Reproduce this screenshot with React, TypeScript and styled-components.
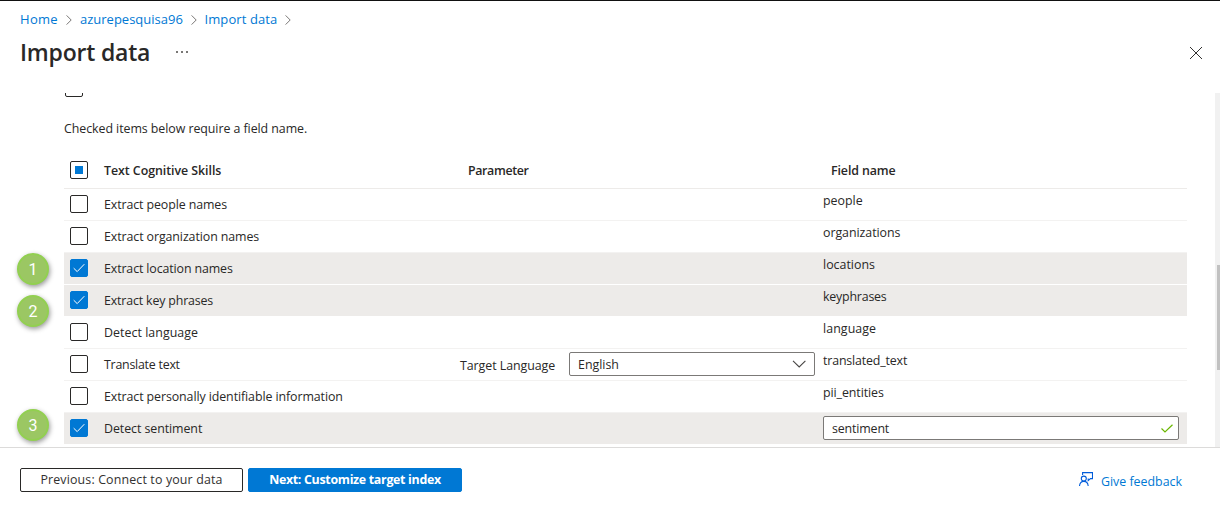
import React from "react";
import styled, { createGlobalStyle } from "styled-components";

const Global = createGlobalStyle`
  * { box-sizing: border-box; }
  body {
    margin: 0;
    background: #fff;
    color: #292827;
    font-family: "Open Sans", "Noto Sans", sans-serif;
    font-size: 12.4px;
    line-height: 18px;
  }
`;

const Page = styled.div`
  position: relative;
  width: 1220px;
  height: 510px;
  display: flex;
  flex-direction: column;
  border-top: 1px solid #111;
  overflow: hidden;
`;

const Text = styled.span<{ $ls?: number }>`
  white-space: nowrap;
  letter-spacing: ${(p) => p.$ls ?? 0}px;
`;

const Top = styled.header`
  height: 92px;
  flex: none;
  padding: 9px 17px 0 20px;
`;

const Crumbs = styled.nav`
  display: flex;
  align-items: center;
  height: 18px;
  font-size: 13px;
  color: #0078d4;
`;

const Crumb = styled.a<{ $w: number; $ls?: number }>`
  width: ${(p) => p.$w}px;
  white-space: nowrap;
  letter-spacing: ${(p) => p.$ls ?? 0}px;
`;

const CrumbArrow = styled.svg`
  width: 6px;
  height: 10px;
  margin: 1px 8px 0 8px;
  flex: none;
`;

const TitleRow = styled.div`
  display: flex;
  align-items: center;
  height: 32px;
  margin-top: 8px;
`;

const Title = styled.h1`
  margin: 0;
  width: 156px;
  font-size: 23px;
  line-height: 32px;
  font-weight: 600;
  letter-spacing: -0.2px;
  white-space: nowrap;
`;

const Dots = styled.svg`
  width: 12px;
  height: 2px;
`;

const Close = styled.svg`
  width: 14px;
  height: 14px;
  margin: 1px 0 0 auto;
`;

const Body = styled.main`
  display: flex;
  justify-content: space-between;
  height: 354px;
  flex: none;
  overflow: hidden;
`;

const Content = styled.div`
  width: 1123px;
  margin-left: 64px;
`;

const Track = styled.div`
  width: 5px;
  height: 354px;
  padding: 172px 0 0 2px;
  background: #f1f1f1;
`;

const Thumb = styled.div`
  height: 105px;
  background: #c1c1c1;
`;

const Box = styled.span<{ $on?: boolean }>`
  display: flex;
  align-items: center;
  justify-content: center;
  flex: none;
  width: 18px;
  height: 18px;
  border: 1px solid ${(p) => (p.$on ? "#0078d4" : "#292827")};
  border-radius: 2px;
  background: ${(p) => (p.$on ? "#0078d4" : "#fff")};
`;

const Partial = styled.span`
  width: 8px;
  height: 8px;
  background: #0078d4;
`;

const Above = styled.div`
  height: 27px;
  padding-left: 1px;
  margin-top: -14px;
`;

const Hint = styled.p`
  margin: 0;
  padding-top: 14px;
  height: 46px;
  white-space: nowrap;
`;

const Row = styled.div<{ $on?: boolean }>`
  display: grid;
  grid-template-columns: 34px 356px 363px 364px;
  align-items: center;
  height: 32px;
  padding: 0 0 1px 6px;
  border-bottom: 1px solid ${(p) => (p.$on ? "#fff" : "#f3f2f1")};
  background: ${(p) => (p.$on ? "#edebe9" : "#fff")};
`;

const HeadRow = styled(Row)`
  height: 37px;
  padding-bottom: 0;
  border-bottom-color: #edebe9;
  font-weight: 600;
`;

const HeadCell = styled.span<{ $indent?: number; $ls?: number }>`
  padding-top: 1px;
  padding-left: ${(p) => p.$indent ?? 0}px;
  letter-spacing: ${(p) => p.$ls ?? 0}px;
  white-space: nowrap;
`;

const SkillName = styled.span<{ $ls?: number }>`
  padding-top: 1px;
  white-space: nowrap;
  letter-spacing: ${(p) => p.$ls ?? 0}px;
`;

const FieldText = styled.span<{ $ls?: number }>`
  padding-bottom: 6px;
  letter-spacing: ${(p) => p.$ls ?? 0}px;
`;

const Param = styled.div`
  display: flex;
  align-items: center;
`;

const ParamLabel = styled.span`
  width: 109px;
  padding-top: 3px;
  letter-spacing: -0.05px;
`;

const Control = styled.div<{ $w: number }>`
  display: flex;
  align-items: center;
  justify-content: space-between;
  width: ${(p) => p.$w}px;
  height: 24px;
  padding: 0 5px 0 8px;
  border: 1px solid #7b7977;
  border-radius: 2px;
  background: #fff;
`;

const ControlText = styled(Text)`
  padding-top: 2px;
`;

const Glyph = styled.svg<{ $w: number; $h: number }>`
  width: ${(p) => p.$w}px;
  height: ${(p) => p.$h}px;
  flex: none;
`;

const Footer = styled.footer`
  display: flex;
  align-items: flex-start;
  height: 63px;
  padding: 20px 38px 0 20px;
  border-top: 1px solid #dcdbda;
`;

const Button = styled.button<{ $primary?: boolean; $w: number; $ls?: number }>`
  width: ${(p) => p.$w}px;
  height: 24px;
  margin-right: 5px;
  padding: 0 0 1px;
  border: 1px solid ${(p) => (p.$primary ? "#0078d4" : "#292827")};
  border-radius: 2px;
  background: ${(p) => (p.$primary ? "#0078d4" : "#fff")};
  color: ${(p) => (p.$primary ? "#fff" : "#323130")};
  font: ${(p) => (p.$primary ? 700 : 500)} 12.4px/18px "Open Sans", sans-serif;
  letter-spacing: ${(p) => p.$ls ?? 0}px;
  white-space: nowrap;
`;

const Feedback = styled.a`
  display: flex;
  align-items: flex-start;
  gap: 8px;
  margin: 3px 0 0 auto;
  color: #0078d4;
`;

const FeedbackIcon = styled(Glyph)`
  margin-top: 1px;
`;

const FeedbackText = styled.span`
  padding-top: 2px;
  white-space: nowrap;
`;

const Badge = styled.span<{ $y: number }>`
  position: absolute;
  left: 17px;
  top: ${(p) => p.$y}px;
  width: 32px;
  height: 32px;
  border: 2px solid #92d050;
  border-radius: 50%;
  background: #9bc763;
  box-shadow: 1px 2px 5px rgba(0, 0, 0, 0.4);
  color: #fff;
  font: 16px/29px Roboto, sans-serif;
  text-align: center;
`;

const Check = () => (
  <Glyph $w={12} $h={10} viewBox="0 0 12 10">
    <path d="M.7 5.2 4.2 8.6 11.3 1.2" fill="none" stroke="#fff" strokeWidth="1" />
  </Glyph>
);

const Arrow = () => (
  <CrumbArrow viewBox="0 0 6 10">
    <path d="M.6.4 5.2 5 .6 9.6" fill="none" stroke="#797775" strokeWidth="1" />
  </CrumbArrow>
);

type Skill = { name: string; field: string; ls?: number; fls?: number; on?: boolean; lang?: boolean; edit?: boolean };

const skills: Skill[] = [
  { name: "Extract people names", field: "people", ls: -0.1 },
  { name: "Extract organization names", field: "organizations", ls: -0.09, fls: -0.05 },
  { name: "Extract location names", field: "locations", ls: -0.12, on: true },
  { name: "Extract key phrases", field: "keyphrases", ls: -0.16, fls: -0.2, on: true },
  { name: "Detect language", field: "language", ls: 0.04, fls: 0.08 },
  { name: "Translate text", field: "translated_text", ls: -0.24, fls: -0.16, lang: true },
  { name: "Extract personally identifiable information", field: "pii_entities", ls: -0.09, fls: -0.08 },
  { name: "Detect sentiment", field: "sentiment", ls: -0.07, on: true, edit: true, fls: -0.15 },
];

export default function App() {
  return (
    <>
      <Global />
      <Page>
        <Top>
          <Crumbs>
            <Crumb $w={38} $ls={0.3}>Home</Crumb>
            <Arrow />
            <Crumb $w={102.5}>azurepesquisa96</Crumb>
            <Arrow />
            <Crumb $w={72.5} $ls={0.1}>Import data</Crumb>
            <Arrow />
          </Crumbs>
          <TitleRow>
            <Title>Import data</Title>
            <Dots viewBox="0 0 12 2">
              <path d="M0 0h2v2H0zM5 0h2v2H5zM10 0h2v2h-2z" fill="#797775" />
            </Dots>
            <Close viewBox="0 0 14 14">
              <path d="M1 1 13 13M13 1 1 13" stroke="#323130" strokeWidth="1" />
            </Close>
          </TitleRow>
        </Top>
        <Body>
          <Content>
            <Above>
              <Box />
            </Above>
            <Hint>
              <Text $ls={-0.06}>Checked items below require a field name.</Text>
            </Hint>
            <HeadRow>
              <Box>
                <Partial />
              </Box>
              <HeadCell $ls={-0.05}>Text Cognitive Skills</HeadCell>
              <HeadCell $indent={8} $ls={-0.35}>Parameter</HeadCell>
              <HeadCell $indent={8} $ls={-0.1}>Field name</HeadCell>
            </HeadRow>
            {skills.map((s) => (
              <Row key={s.name} $on={s.on}>
                <Box $on={s.on}>{s.on && <Check />}</Box>
                <SkillName $ls={s.ls}>{s.name}</SkillName>
                <Param>
                  {s.lang && (
                    <>
                      <ParamLabel>Target Language</ParamLabel>
                      <Control $w={246}>
                        <ControlText>English</ControlText>
                        <Glyph $w={19} $h={8} viewBox="0 0 19 8">
                          <path d="M3 .8 9.2 7 15.4.8" fill="none" stroke="#484644" strokeWidth="1.1" />
                        </Glyph>
                      </Control>
                    </>
                  )}
                </Param>
                {s.edit ? (
                  <Control $w={356}>
                    <ControlText $ls={s.fls}>{s.field}</ControlText>
                    <Glyph $w={12} $h={9} viewBox="0 0 12 9">
                      <path d="M.5 4.5 4 8 11.5.7" fill="none" stroke="#6bb700" strokeWidth="1.2" />
                    </Glyph>
                  </Control>
                ) : (
                  <FieldText $ls={s.fls}>{s.field}</FieldText>
                )}
              </Row>
            ))}
          </Content>
          <Track>
            <Thumb />
          </Track>
        </Body>
        <Footer>
          <Button $w={223} $ls={0.15}>Previous: Connect to your data</Button>
          <Button $w={214} $primary $ls={-0.3}>
            Next: Customize target index
          </Button>
          <Feedback>
            <FeedbackIcon $w={14} $h={15} viewBox="0 0 14 15">
              <g fill="none" stroke="#015cda" strokeWidth="1.1">
                <path d="M3.6 3V.6h9.9v6h-2L9.2 8.6V6.6" />
                <circle cx="4.8" cy="6.6" r="2.5" />
                <path d="M.5 14c.3-3 2-4.6 4.3-4.6S8.900 11 9.200 14" />
              </g>
            </FeedbackIcon>
            <FeedbackText>Give feedback</FeedbackText>
          </Feedback>
        </Footer>
        <Badge $y={252}>1</Badge>
        <Badge $y={294}>2</Badge>
        <Badge $y={408}>3</Badge>
      </Page>
    </>
  );
}
